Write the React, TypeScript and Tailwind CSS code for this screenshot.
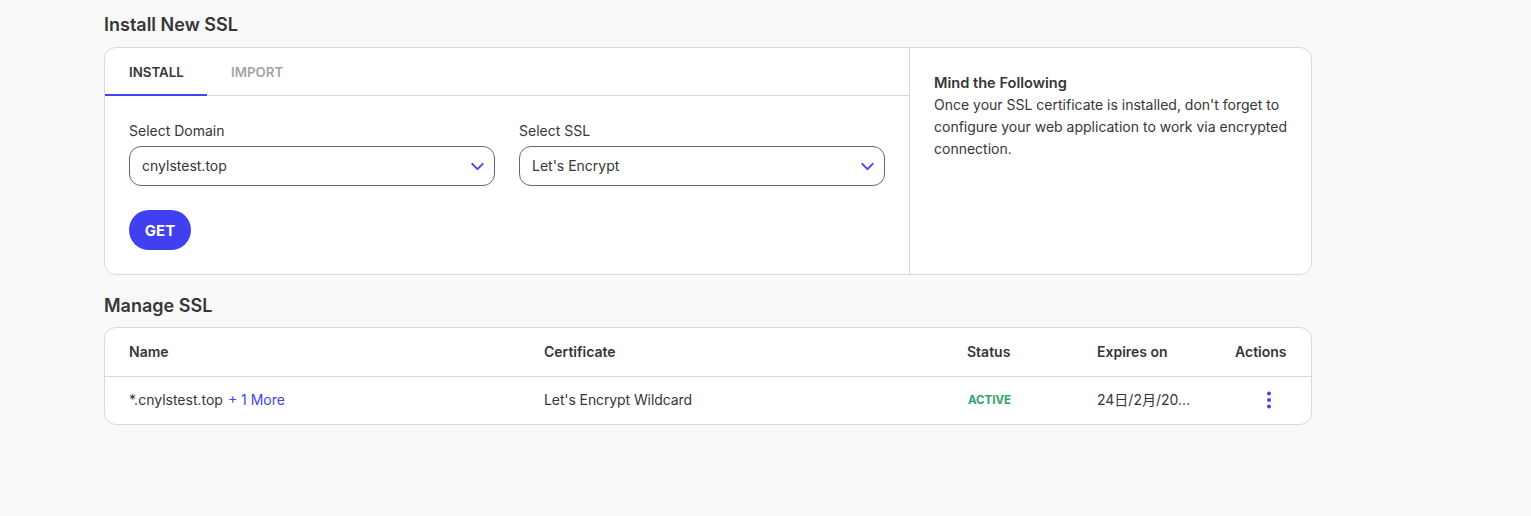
import { ChevronDown } from "lucide-react";

const heading = "text-[18px] leading-[24px] font-semibold text-[#363636]";

function SelectBox({ label, value }: { label: string; value: string }) {
  return (
    <div className="flex-1">
      <div className="text-sm leading-[20px] text-[#363636] mb-[5px]">{label}</div>
      <div className="flex items-center justify-between h-10 pl-3 pr-[6px] rounded-xl border border-[#666] text-sm text-[#363636]">
        <span>{value}</span>
        <ChevronDown className="w-[21px] h-[21px] text-[#4343f0]" strokeWidth={2.2} />
      </div>
    </div>
  );
}

export default function App() {
  return (
    <div className="min-h-[516px] bg-[#f9f9f9] font-['Inter','Noto_Sans_CJK_JP',sans-serif]">
      <div className="w-[1208px] ml-[104px]">
        <h2 className={`${heading} pt-[13px] mb-[10px]`}>Install New SSL</h2>
        <div className="flex h-[228px] bg-white border border-[#d9d9d9] rounded-xl overflow-hidden">
          <div className="w-[805px] border-r border-[#d9d9d9]">
            <div className="flex h-[48px] border-b border-[#d9d9d9] text-[13.3px] font-semibold">
              <div className="w-[102px] h-[48px] pl-6 pt-[3px] flex items-center border-b-2 border-[#4343f0] text-[#363636]">INSTALL</div>
              <div className="pl-6 pt-[2px] flex items-center text-[#a4a4a4]">IMPORT</div>
            </div>
            <div className="px-6 pt-[25px]">
              <div className="flex gap-6">
                <SelectBox label="Select Domain" value="cnylstest.top" />
                <SelectBox label="Select SSL" value="Let's Encrypt" />
              </div>
              <button className="mt-6 w-[62px] h-10 pt-[2px] rounded-full bg-[#4040f0] text-white text-[15px] font-bold">GET</button>
            </div>
          </div>
          <div className="flex-1 pl-6 pr-4 pt-6 text-sm leading-[22px] text-[#363636]">
            <div className="text-[14.6px] font-semibold">Mind the Following</div>
            <p>Once your SSL certificate is installed, don't forget to configure your web application to work via encrypted connection.</p>
          </div>
        </div>

        <h2 className={`${heading} pt-[19px] mb-[9px]`}>Manage SSL</h2>
        <div className="bg-white border border-[#d9d9d9] rounded-xl overflow-hidden text-sm text-[#363636]">
          <div className="flex items-center h-[49px] border-b border-[#d9d9d9] font-semibold">
            <div className="w-[439px] pl-6">Name</div>
            <div className="w-[423px]">Certificate</div>
            <div className="w-[130px]">Status</div>
            <div className="w-[138px]">Expires on</div>
            <div>Actions</div>
          </div>
          <div className="flex items-center h-[47px] pb-[2px]">
            <div className="w-[439px] pl-6">
              *.cnylstest.top <span className="ml-px text-[#4343f0]">+ 1 More</span>
            </div>
            <div className="w-[423px] tracking-[-0.1px]">Let's Encrypt Wildcard</div>
            <div className="w-[130px] pl-px pt-[2px] text-[11.5px] font-bold text-[#2fa36b]">ACTIVE</div>
            <div className="w-[138px]">24日/2月/20...</div>
            <div className="pl-[31px]">
              <svg width="6" height="18" viewBox="0 0 6 18" className="text-[#4343f0]" fill="currentColor">
                <circle cx="3" cy="2.5" r="2" />
                <circle cx="3" cy="9" r="2" />
                <circle cx="3" cy="15.5" r="2" />
              </svg>
            </div>
          </div>
        </div>
      </div>
    </div>
  );
}
